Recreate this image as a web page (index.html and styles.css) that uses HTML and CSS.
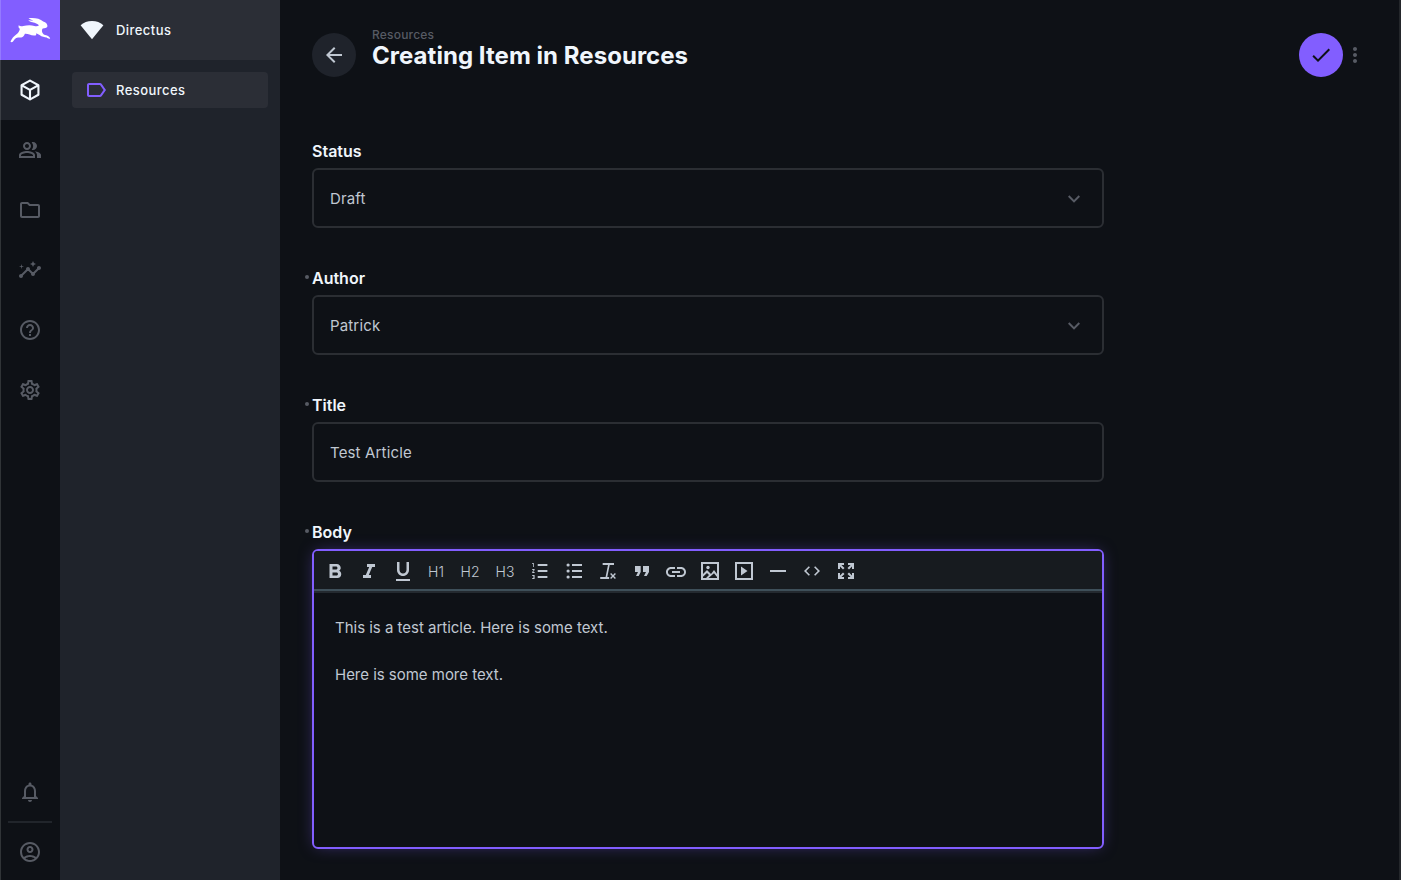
FILE: index.html
```html
<!DOCTYPE html>
<html lang="en">
<head>
<meta charset="utf-8">
<title>Creating Item in Resources</title>
<link rel="stylesheet" href="styles.css">
</head>
<body>
<div class="app">
  <nav class="modules">
    <a class="logo"><svg width="41" height="26" viewBox="0 0 41 26"><path d="M.5 24.4C1.8 21.6 3.7 19.2 6.200 17.500C8 16.200 9.300 14.500 9.900 11.700C8.600 11.200 8.300 10 8.700 8.300C10 9.400 11.700 9.400 13.300 8.900C17.200 8 21.200 7.800 24.300 8.900C26.200 9.600 28 9.400 29 8.200C27.500 6.800 25.400 5.700 22.500 5.200C20.700 4.900 19.200 4.300 18.300 3.200C20.300 3.500 22 3.500 23.300 3.700C21.600 3 19.600 2.300 18.500 1.100C24 .5 30 1.200 33.200 4.500C36 5 37.400 7 37.500 9.300C36.600 11.500 34.800 11.100 32.700 11.600C31.400 13 31.700 15.500 33.500 17.200C35.600 18.600 38.600 18 40.200 21.400C39 22.200 37.700 21.300 36.700 20.600C34.500 20 31.900 20.200 29.600 18.100L26.200 16.200C26.600 17.900 25.700 18.900 24 18.500C20.300 18.100 17.800 16.400 14.900 16.700C13.600 20.800 10.900 20.400 8 20.600C5.400 20.900 4 23.200 2.800 24.800C1.800 25.500.8 25.300.5 24.400Z"/></svg></a>
    <a class="module active"><svg class="icon" viewBox="0 0 24 24"><path transform="translate(-.65 -.65) scale(1.054)" d="M21 16.500c0 .38-.21.710-.53.880l-7.900 4.440c-.16.120-.36.180-.57.180s-.41-.06-.57-.18l-7.900-4.440A.99.990 0 0 1 3 16.500v-9c0-.38.210-.71.530-.88l7.900-4.440c.16-.12.360-.18.570-.18s.41.060.57.180l7.900 4.440c.32.170.53.500.53.880v9M12 4.150 6.040 7.500 12 10.850l5.960-3.350L12 4.150M5 15.910l6 3.380v-6.710L5 9.210v6.700m14 0v-6.700l-6 3.370v6.710l6-3.380Z"/></svg></a>
    <a class="module"><svg class="icon" viewBox="0 0 24 24"><path d="M16.670 13.130C18.040 14.060 19 15.320 19 17v3h4v-3c0-2.180-3.570-3.470-6.330-3.870zM15 12c2.210 0 4-1.790 4-4s-1.790-4-4-4c-.47 0-.91.100-1.330.240a5.980 5.980 0 0 1 0 7.520c.42.140.860.240 1.330.240zM9 12c2.210 0 4-1.790 4-4s-1.790-4-4-4-4 1.790-4 4 1.790 4 4 4zm0-6c1.100 0 2 .9 2 2s-.9 2-2 2-2-.9-2-2 .9-2 2-2zM9 13c-2.670 0-8 1.340-8 4v3h16v-3c0-2.660-5.330-4-8-4zm6 5H3v-.99C3.200 16.290 6.300 15 9 15s5.800 1.290 6 2v1z"/></svg></a>
    <a class="module"><svg class="icon" viewBox="0 0 24 24"><path d="m9.170 6 2 2H20v10H4V6h5.170M10 4H4c-1.100 0-1.990.9-1.990 2L2 18c0 1.100.9 2 2 2h16c1.100 0 2-.9 2-2V8c0-1.100-.9-2-2-2h-8l-2-2z"/></svg></a>
    <a class="module"><svg class="icon" viewBox="0 0 24 24"><path d="M21 8c-1.450 0-2.260 1.440-1.930 2.510l-3.550 3.560c-.3-.09-.74-.09-1.040 0l-2.550-2.550C12.270 10.450 11.460 9 10 9c-1.450 0-2.270 1.440-1.930 2.520l-4.560 4.550C2.440 15.740 1 16.550 1 18c0 1.100.9 2 2 2 1.450 0 2.260-1.440 1.930-2.510l4.550-4.560c.3.090.74.090 1.040 0l2.550 2.550C12.730 16.550 13.540 18 15 18c1.450 0 2.270-1.440 1.930-2.520l3.560-3.550C21.560 12.260 23 11.450 23 10c0-1.100-.9-2-2-2zM15 9l.94-2.070L18 6l-2.060-.93L15 3l-.92 2.070L12 6l2.080.93zM3.500 11 4 9l2-.5L4 8l-.5-2L3 8l-2 .5L3 9z"/></svg></a>
    <a class="module"><svg class="icon" viewBox="0 0 24 24"><path d="M11 18h2v-2h-2v2zm1-16C6.480 2 2 6.480 2 12s4.480 10 10 10 10-4.480 10-10S17.520 2 12 2zm0 18c-4.410 0-8-3.590-8-8s3.590-8 8-8 8 3.590 8 8-3.590 8-8 8zm0-14c-2.210 0-4 1.790-4 4h2c0-1.100.9-2 2-2s2 .9 2 2c0 2-3 1.750-3 5h2c0-2.250 3-2.500 3-5 0-2.210-1.790-4-4-4z"/></svg></a>
    <a class="module"><svg class="icon" viewBox="0 0 24 24"><path d="M19.430 12.980c.04-.32.070-.64.070-.98s-.03-.66-.07-.98l2.110-1.650c.19-.15.240-.42.120-.64l-2-3.460c-.09-.16-.26-.25-.44-.25-.06 0-.12.010-.17.030l-2.490 1c-.52-.4-1.080-.73-1.690-.98l-.38-2.650C14.460 2.180 14.250 2 14 2h-4c-.25 0-.46.180-.49.420l-.38 2.650c-.61.250-1.170.590-1.690.980l-2.490-1c-.06-.02-.12-.03-.18-.03-.17 0-.34.090-.43.250l-2 3.460c-.13.220-.07.490.12.640l2.110 1.650c-.04.320-.07.650-.07.980s.03.660.07.980l-2.110 1.650c-.19.150-.24.420-.12.640l2 3.460c.09.160.26.250.44.250.06 0 .12-.01.170-.03l2.490-1c.52.4 1.080.730 1.690.980l.38 2.650c.03.240.24.420.49.420h4c.25 0 .46-.18.490-.42l.38-2.650c.61-.25 1.170-.59 1.690-.98l2.490 1c.06.020.12.030.18.030.17 0 .34-.09.430-.25l2-3.460c.12-.22.070-.49-.12-.64l-2.110-1.650zm-1.980-1.710c.04.310.05.520.05.730s-.02.430-.05.730l-.14 1.130.89.7 1.080.840-.7 1.210-1.270-.51-1.040-.42-.9.680c-.43.320-.84.560-1.250.73l-1.060.43-.16 1.130-.2 1.350h-1.400l-.19-1.350-.16-1.130-1.060-.43c-.43-.18-.83-.41-1.230-.71l-.91-.7-1.060.43-1.270.51-.7-1.210 1.080-.84.890-.7-.14-1.130c-.03-.31-.05-.54-.05-.74s.02-.43.050-.73l.14-1.130-.89-.7-1.080-.84.7-1.210 1.270.51 1.040.42.900-.68c.43-.32.840-.56 1.250-.73l1.060-.43.160-1.130.2-1.350h1.390l.19 1.350.16 1.130 1.060.43c.43.180.83.410 1.230.71l.91.7 1.060-.43 1.270-.51.700 1.210-1.070.85-.89.7.14 1.130zM12 8c-2.210 0-4 1.790-4 4s1.790 4 4 4 4-1.790 4-4-1.790-4-4-4zm0 6c-1.100 0-2-.9-2-2s.9-2 2-2 2 .9 2 2-.9 2-2 2z"/></svg></a>
    <div class="spacer"></div>
    <a class="module"><svg class="icon" viewBox="0 0 24 24"><path d="M12 22c1.100 0 2-.9 2-2h-4c0 1.100.9 2 2 2zm6-6v-5c0-3.070-1.630-5.640-4.500-6.320V4c0-.83-.67-1.500-1.500-1.500s-1.500.67-1.500 1.500v.68C7.640 5.360 6 7.920 6 11v5l-2 2v1h16v-1l-2-2zm-2 1H8v-6c0-2.480 1.510-4.500 4-4.500s4 2.020 4 4.500v6z"/></svg></a>
    <div class="divider"></div>
    <a class="module user"><svg class="icon" viewBox="0 0 24 24"><path d="M12 2C6.480 2 2 6.480 2 12s4.480 10 10 10 10-4.480 10-10S17.520 2 12 2zM7.350 18.500C8.660 17.560 10.260 17 12 17s3.340.56 4.650 1.500C15.340 19.440 13.740 20 12 20s-3.340-.56-4.650-1.500zm10.790-1.380C16.450 15.800 14.320 15 12 15s-4.450.8-6.140 2.120A7.960 7.960 0 0 1 4 12c0-4.420 3.580-8 8-8s8 3.580 8 8c0 1.950-.7 3.730-1.860 5.120zM12 6c-1.930 0-3.500 1.570-3.500 3.500S10.070 13 12 13s3.500-1.570 3.500-3.500S13.930 6 12 6zm0 5c-.83 0-1.500-.67-1.500-1.500S11.170 8 12 8s1.500.67 1.500 1.500S12.830 11 12 11z"/></svg></a>
  </nav>
  <aside class="navigation">
    <div class="project"><svg class="icon" viewBox="0 0 24 24"><path d="M12 3C7.600 3 3.500 4.500.6 7.200L12 21.200 23.400 7.200C20.500 4.500 16.400 3 12 3Z"/></svg><span>Directus</span></div>
    <a class="nav-item"><svg class="icon" viewBox="0 0 24 24"><path d="M17.630 5.840C17.270 5.330 16.670 5 16 5L5 5.010C3.900 5.010 3 5.900 3 7v10c0 1.100.9 1.990 2 1.990L16 19c.67 0 1.270-.33 1.630-.84L22 12l-4.370-6.160zM16 17H5V7h11l3.550 5L16 17z"/></svg><span>Resources</span></a>
  </aside>
  <main class="content">
    <header class="header">
      <button class="round back"><svg class="icon" viewBox="0 0 24 24"><path d="M20 11H7.830l5.590-5.590L12 4l-8 8 8 8 1.410-1.410L7.830 13H20v-2z"/></svg></button>
      <div class="heading"><div class="crumb">Resources</div><h1>Creating Item in Resources</h1></div>
      <button class="round save"><svg class="icon" viewBox="0 0 24 24"><path d="M9 16.170 4.830 12l-1.420 1.410L9 19 21 7l-1.410-1.410L9 16.170z"/></svg></button>
      <button class="more"><svg class="icon" viewBox="0 0 24 24"><path d="M12 8c1.100 0 2-.9 2-2s-.9-2-2-2-2 .9-2 2 .9 2 2 2zm0 2c-1.100 0-2 .9-2 2s.9 2 2 2 2-.9 2-2-.9-2-2-2zm0 6c-1.100 0-2 .9-2 2s.9 2 2 2 2-.9 2-2-.9-2-2-2z"/></svg></button>
    </header>
    <form class="form">
      <section class="field"><label>Status</label><div class="input"><span>Draft</span><svg class="icon" viewBox="0 0 24 24"><path d="M7.410 9.340 12 13.920l4.590-4.580L18 10.750l-6 6-6-6 1.410-1.410z"/></svg></div></section>
      <section class="field"><label class="required">Author</label><div class="input"><span>Patrick</span><svg class="icon" viewBox="0 0 24 24"><path d="M7.410 9.340 12 13.920l4.590-4.580L18 10.750l-6 6-6-6 1.410-1.410z"/></svg></div></section>
      <section class="field"><label class="required">Title</label><div class="input"><span>Test Article</span></div></section>
      <section class="field"><label class="required">Body</label>
        <div class="editor">
          <div class="toolbar">
            <span class="tool"><svg viewBox="0 0 24 24"><path transform="translate(.5 0)" d="M15.600 11.790c.97-.67 1.650-1.770 1.650-2.790 0-2.260-1.750-4-4-4H6v14h8.040c2.090 0 3.710-1.700 3.710-3.790 0-1.520-.86-2.820-2.150-3.420zM9 7.500h3.500c.83 0 1.500.67 1.500 1.500s-.67 1.500-1.500 1.500H9v-3zm4 9H9v-3h4c.83 0 1.500.67 1.500 1.500s-.67 1.500-1.500 1.500z"/></svg></span>
            <span class="tool"><svg viewBox="0 0 24 24"><path d="M10 5v3h2.210l-3.420 8H6v3h8v-3h-2.210l3.420-8H18V5z"/></svg></span>
            <span class="tool"><svg viewBox="0 0 24 24"><path d="M12 17c3.310 0 6-2.690 6-6V3h-2.500v8c0 1.930-1.570 3.500-3.500 3.500S8.500 12.930 8.500 11V3H6v8c0 3.310 2.690 6 6 6zm-7 3v2h14v-2H5z"/></svg></span>
            <span class="tool text first">H1</span>
            <span class="tool text">H2</span>
            <span class="tool text wide">H3</span>
            <span class="tool"><svg viewBox="0 0 24 24"><path transform="translate(2.600 0) scale(.8 1)" d="M2 17h2v.5H3v1h1v.5H2v1h3v-4H2v1zm1-9h1V4H2v1h1v3zm-1 3h1.800L2 13.100v.9h3v-1H3.200L5 10.900V10H2v1z"/><path d="M9.700 5h9.700v2H9.700zm0 6h9.700v2H9.700zm0 6h9.700v2H9.700z"/></svg></span>
            <span class="tool"><svg viewBox="0 0 24 24"><circle cx="6.100" cy="6" r="1.600"/><circle cx="6.100" cy="12" r="1.600"/><circle cx="6.100" cy="18" r="1.600"/><path d="M10 5h10v2H10zm0 6h10v2H10zm0 6h10v2H10z"/></svg></span>
            <span class="tool"><svg viewBox="0 0 24 24"><path transform="translate(1.800 0) scale(.81 1)" d="M6 4h14v2h-5.300l-3 12H14v2H3v-2h6.600l3-12H6V4z"/><path d="m14.100 15.100 1-1 1.900 1.900 1.900-1.900 1 1-1.900 1.900 1.900 1.900-1 1-1.900-1.900-1.900 1.900-1-1 1.900-1.900-1.900-1.900z"/></svg></span>
            <span class="tool"><svg viewBox="0 0 24 24"><path d="M6 17h2.700l2-4V7H5v6h3l-2 4zm8 0h2.700l2.300-4V7h-6v6h3l-2 4z"/></svg></span>
            <span class="tool"><svg viewBox="0 0 24 24"><path transform="translate(0 1)" d="M3.900 12c0-1.710 1.390-3.100 3.100-3.100h4V7H7c-2.760 0-5 2.240-5 5s2.240 5 5 5h4v-1.900H7c-1.710 0-3.100-1.390-3.100-3.100zM8 13h8v-2H8v2zm9-6h-4v1.900h4c1.710 0 3.100 1.390 3.100 3.100s-1.390 3.100-3.100 3.100h-4V17h4c2.760 0 5-2.240 5-5s-2.240-5-5-5z"/></svg></span>
            <span class="tool"><svg viewBox="0 0 24 24"><path d="M3 3h18v18H3V3zm2 2v10l4-4 4 4 3-4 3 4V5H5zm0 12.800V19h3l3-3-2-2-4 3.800zM10.500 19H19v-1l-3-3.800-5.500 4.800z"/><circle cx="10" cy="8.500" r="1.700"/></svg></span>
            <span class="tool"><svg viewBox="0 0 24 24"><path d="M3 3h18v18H3V3zm2 2v14h14V5H5zm4 2.500 6.500 4.500L9 16.500v-9z"/></svg></span>
            <span class="tool"><svg viewBox="0 0 24 24"><path d="M4 11h16v2H4z"/></svg></span>
            <span class="tool"><svg viewBox="0 0 24 24"><path d="M9.400 16.600 4.800 12l4.600-4.600L8 6l-6 6 6 6 1.400-1.400zm5.200 0 4.600-4.600-4.600-4.600L16 6l6 6-6 6-1.400-1.400z" transform="translate(2.400 2.400) scale(.8)"/></svg></span>
            <span class="tool"><svg viewBox="0 0 24 24"><path d="M4 4h6v2H7.400L10.500 9 9 10.500 6 7.400V10H4V4zm10 0h6v6h-2V7.400L15 10.500 13.500 9l3.100-3H14V4zM4 14h2v2.600l3-3.100 1.500 1.500-3.100 3H10v2H4v-6zm14 0h2v6h-6v-2h2.600l-3.100-3 1.500-1.500 3 3.100V14z"/></svg></span>
          </div>
          <div class="document"><p>This is a test article. Here is some text.</p><p>Here is some more text.</p></div>
        </div>
      </section>
    </form>
  </main>
</div>
</body>
</html>
```
FILE: styles.css
```css
* { box-sizing: border-box; }
body { margin: 0; background: #0e1116; color: #c0c8d2; font-family: Inter, sans-serif; font-size: 15px; overflow: hidden; }
svg { display: block; fill: currentColor; flex: none; }
.icon { width: 24px; height: 24px; }
.app { display: flex; height: 880px; border-right: 2px solid #24272b; }
.modules { display: flex; flex-direction: column; width: 60px; flex: none; color: #575b64; box-shadow: inset 1px 0 #303437; }
.logo { display: flex; height: 60px; padding: 17px 0 0 10px; color: #fff; background: #825eff; box-shadow: inset 1px 0 #947aff; }
.module { display: flex; align-items: center; justify-content: center; height: 60px; }
.module.active { background: #1f232b; color: #f0f6fc; box-shadow: inset 1px 0 #3b3f45; }
.spacer { flex: 1; }
.divider { height: 2px; margin: -1px 8px; background: #21252b; }
.user { margin-bottom: -2px; }
.navigation { width: 220px; flex: none; background: #1f232b; color: #f0f6fc; font-size: 13px; font-weight: 500; letter-spacing: .45px; }
.project { display: flex; align-items: center; gap: 12px; height: 60px; padding-left: 20px; background: #2b2e36; }
.nav-item { display: flex; align-items: center; gap: 8px; height: 36px; margin: 12px; padding-left: 12px; border-radius: 4px; background: #2b2e36; }
.nav-item .icon { color: #825eff; }
.content { flex: 1; min-width: 0; padding-left: 32px; }
.header { display: flex; align-items: center; height: 110px; padding-right: 32px; }
button { border: 0; padding: 0; background: none; color: inherit; }
.round { display: flex; align-items: center; justify-content: center; width: 44px; height: 44px; border-radius: 50%; }
.back { background: #1f232b; }
.back .icon, .save .icon { width: 24px; height: 24px; }
.save { background: #825eff; color: #0e1116; }
.heading { flex: 1; margin-left: 16px; }
.crumb { height: 14px; margin-top: -12px; color: #575b64; font-size: 12px; line-height: 13px; font-weight: 500; letter-spacing: .2px; }
h1 { margin: 0; color: #f0f6fc; font-size: 24px; line-height: 28px; font-weight: 700; letter-spacing: .04px; }
.more { color: #575b64; }
.form { display: flex; flex-direction: column; gap: 36px; width: 792px; padding-top: 31px; }
label { display: block; position: relative; height: 27px; color: #f0f6fc; font-size: 16px; line-height: 20px; font-weight: 600; }
.required::before { content: ""; position: absolute; left: -7px; top: 7px; width: 4px; height: 4px; border-radius: 50%; background: #575b64; }
.input { display: flex; align-items: center; justify-content: space-between; height: 60px; margin-bottom: 4px; padding: 0 16px; border: 2px solid #2b2e33; border-radius: 6px; letter-spacing: .15px; }
.input .icon { color: #575b64; }
.editor { height: 300px; border: 2px solid #825eff; border-radius: 6px; box-shadow: 0 0 16px -4px #825eff80; overflow: hidden; }
.toolbar { display: flex; align-items: center; height: 42px; padding-left: 4px; background: #171b1f; border-bottom: 2px solid #242a30; box-shadow: inset 0 -2px #3e4f59; }
.tool { display: flex; align-items: center; justify-content: center; width: 34px; height: 40px; }
.tool svg { width: 24px; height: 24px; transform: scale(1); }
.tool.text { font-size: 14px; font-weight: 300; letter-spacing: .1px; }
.tool.first { margin-left: -1px; }
.tool.wide { width: 36px; }
.document { padding: 23px 21px; }
.document p { margin: 0 0 23px; line-height: 24px; letter-spacing: -.02px; }
```
